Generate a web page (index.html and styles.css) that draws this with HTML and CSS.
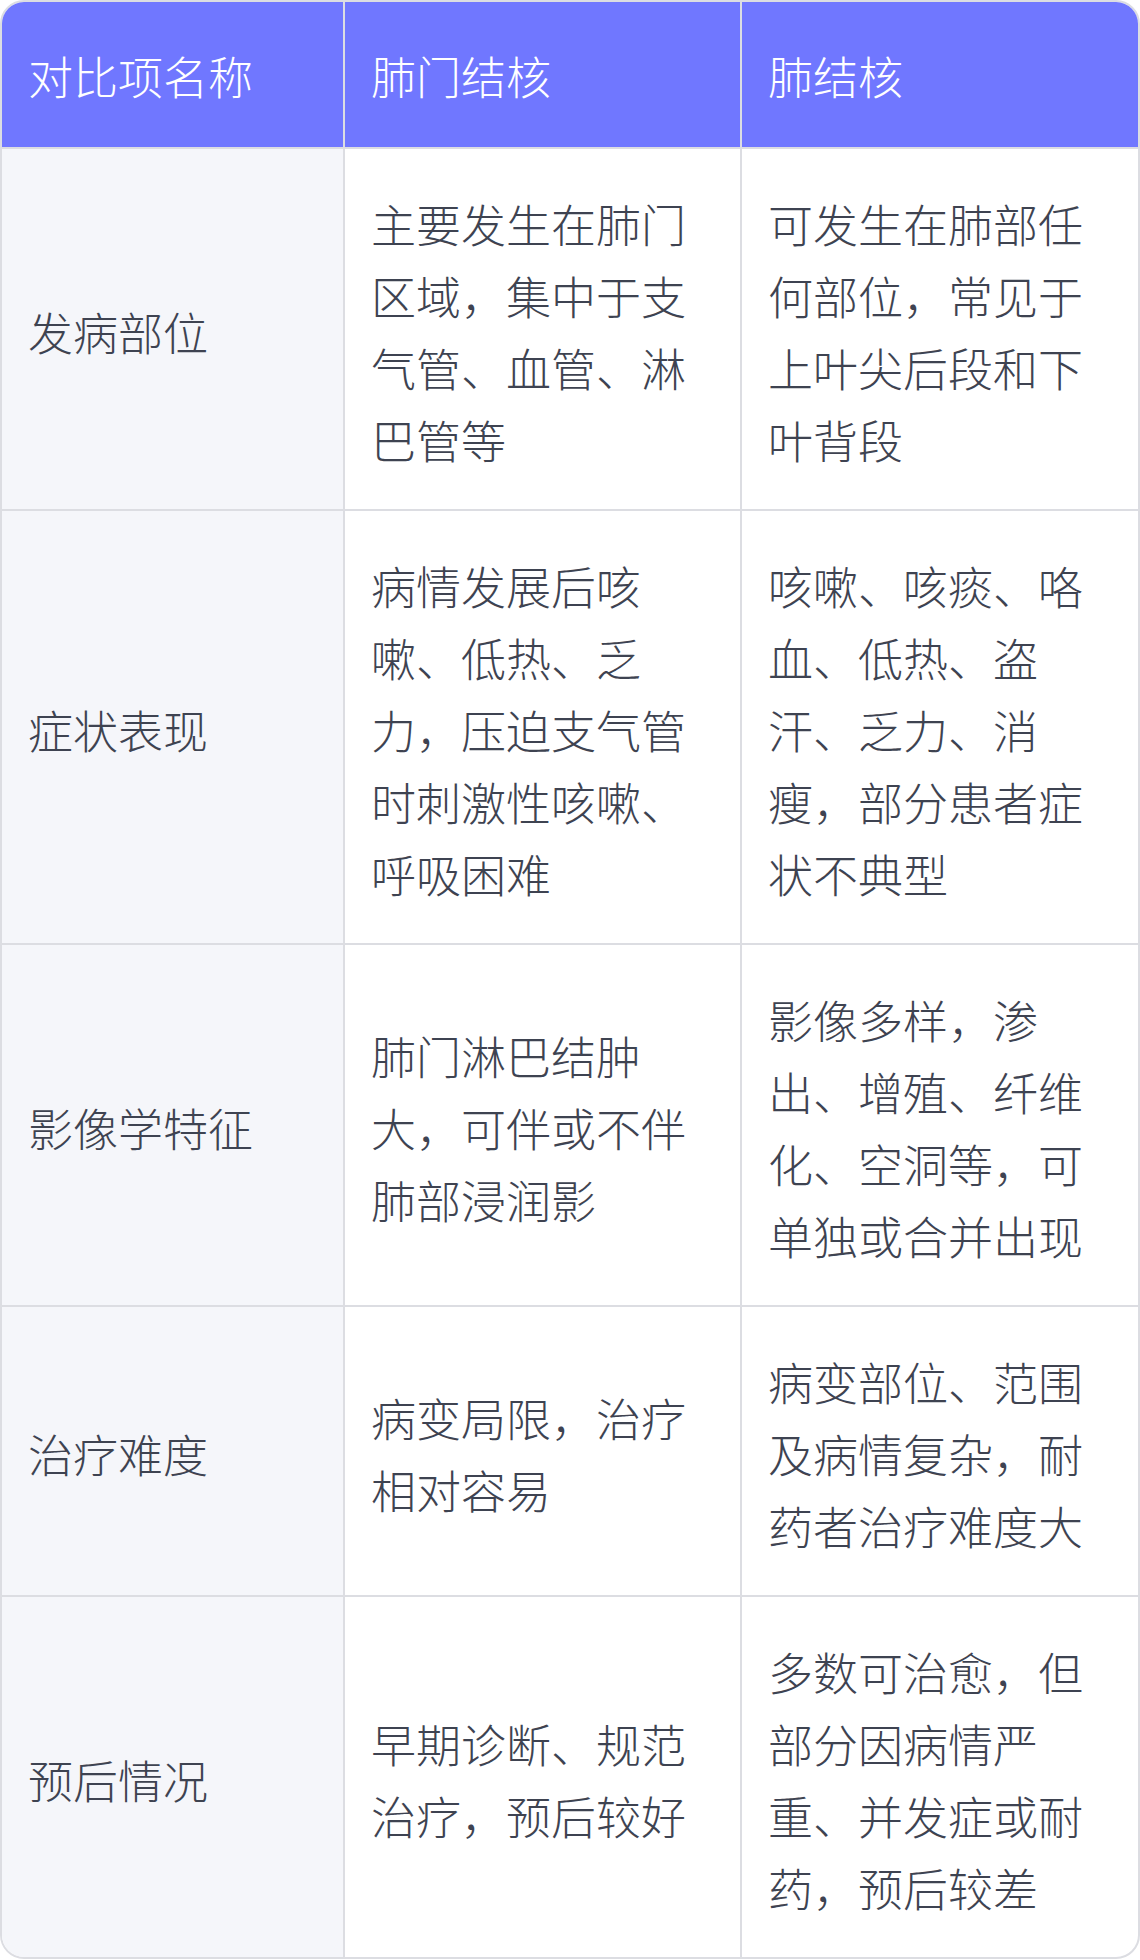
FILE: index.html
```html
<!DOCTYPE html>
<html lang="zh-CN">
<head>
<meta charset="utf-8">
<title>肺门结核与肺结核对比</title>
<link rel="stylesheet" href="styles.css">
</head>
<body>
<div class="wrap">
  <table class="cmp">
    <colgroup>
      <col class="c1"><col class="c2"><col class="c3">
    </colgroup>
    <thead>
      <tr>
        <th>对比项名称</th>
        <th>肺门结核</th>
        <th>肺结核</th>
      </tr>
    </thead>
    <tbody>
      <tr>
        <td class="name">发病部位</td>
        <td>主要发生在肺门区域，集中于支气管、血管、淋巴管等</td>
        <td>可发生在肺部任何部位，常见于上叶尖后段和下叶背段</td>
      </tr>
      <tr>
        <td class="name">症状表现</td>
        <td>病情发展后咳嗽、低热、乏力，压迫支气管时刺激性咳嗽、呼吸困难</td>
        <td>咳嗽、咳痰、咯血、低热、盗汗、乏力、消瘦，部分患者症状不典型</td>
      </tr>
      <tr>
        <td class="name">影像学特征</td>
        <td>肺门淋巴结肿大，可伴或不伴肺部浸润影</td>
        <td>影像多样，渗出、增殖、纤维化、空洞等，可单独或合并出现</td>
      </tr>
      <tr>
        <td class="name">治疗难度</td>
        <td>病变局限，治疗相对容易</td>
        <td>病变部位、范围及病情复杂，耐药者治疗难度大</td>
      </tr>
      <tr>
        <td class="name">预后情况</td>
        <td>早期诊断、规范治疗，预后较好</td>
        <td>多数可治愈，但部分因病情严重、并发症或耐药，预后较差</td>
      </tr>
    </tbody>
  </table>
</div>
</body>
</html>
```
FILE: styles.css
```css
html, body {
  margin: 0;
  padding: 0;
  background: #ffffff;
}
body {
  font-family: "Noto Sans CJK SC", "Noto Sans", sans-serif;
  font-weight: 300;
  color: #3e4351;
}
.wrap {
  width: 1140px;
  box-sizing: border-box;
  border: 2px solid #dcdde2;
  border-radius: 24px;
  overflow: hidden;
}
.cmp {
  width: 100%;
  table-layout: fixed;
  border-collapse: separate;
  border-spacing: 0;
}
.c1 { width: 343px; }
.c2 { width: 397px; }
.c3 { width: auto; }
.cmp th,
.cmp td {
  font-size: 45px;
  line-height: 72px;
  padding: 39px 26px 33px;
  text-align: left;
  vertical-align: middle;
  border-right: 2px solid #dcdde2;
  border-bottom: 2px solid #dcdde2;
  font-weight: 300;
}
.cmp th {
  padding-top: 38px;
  padding-bottom: 35px;
}
.cmp th:last-child,
.cmp td:last-child {
  border-right: none;
}
.cmp tbody tr:last-child td {
  border-bottom: none;
}
.cmp th {
  background: #7077ff;
  color: #ffffff;
}
.cmp td.name {
  background: #f5f6fa;
}
```
